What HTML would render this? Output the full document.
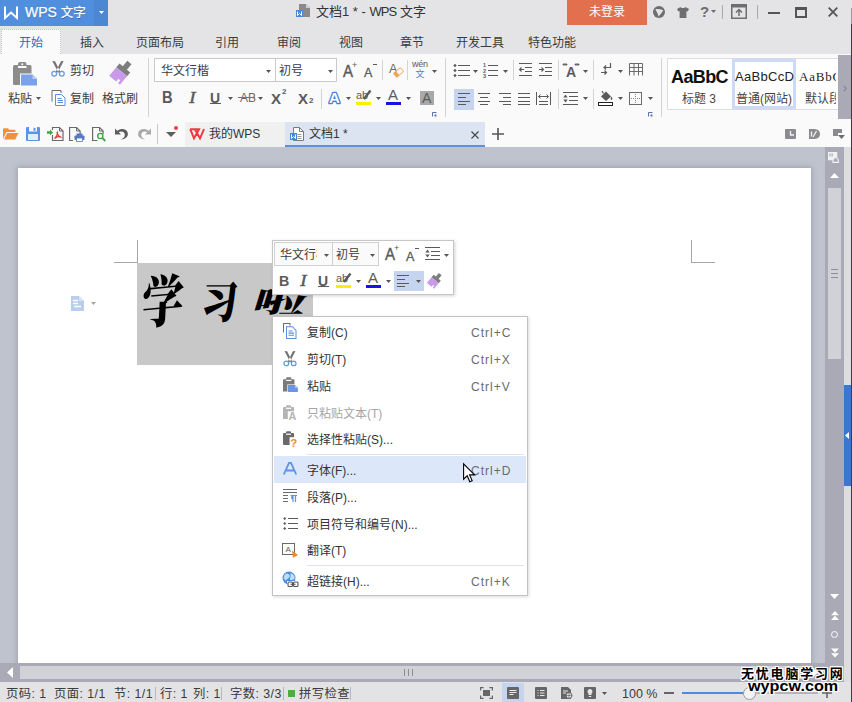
<!DOCTYPE html>
<html lang="zh-CN">
<head>
<meta charset="utf-8">
<title>文档1 * - WPS 文字</title>
<style>
html,body{margin:0;padding:0}
body{width:852px;height:702px;position:relative;overflow:hidden;background:#e4e4e6;
 font-family:"Liberation Sans","Noto Sans CJK SC",sans-serif;font-size:12px;color:#3c3c3c;line-height:1}
.a{position:absolute}
.t{position:absolute;white-space:nowrap;line-height:16px;height:16px}
svg{position:absolute;overflow:visible}
#titlebar{left:0;top:0;width:852px;height:25px;background:#e4e4e6}
#wpsbtn{left:0;top:0;width:94px;height:26px;background:#4f8fde}
#wpsdd{left:94px;top:0;width:14px;height:26px;background:#4c87d4}
#login{left:567px;top:0;width:80px;height:25px;background:#e2704e;color:#fff;text-align:center;line-height:25px;font-size:12px}
#tabs{left:0;top:26px;width:852px;height:28px;background:#e4e4e6}
#tabact{left:1px;top:29px;width:58px;height:24px;background:#fafafa;border:1px dotted #c4c4c8;border-bottom:none}
#ribbon{left:0;top:54px;width:852px;height:65px;background:#fafafa}
#qbar{left:0;top:119px;width:852px;height:28px;background:#fafafa}
#docarea{left:0;top:147px;width:825px;height:516px;background:#bfc3ce;overflow:hidden}
#page{left:18px;top:21px;width:793px;height:520px;background:#fff;box-shadow:0 0 5px 1px rgba(150,152,165,.8)}
#vscroll{left:825px;top:147px;width:19px;height:535px;background:#a9aab5}
#rstrip{left:844px;top:147px;width:8px;height:536px;background:#dddddf}
#hscroll{left:0;top:663px;width:825px;height:19px;background:#a9aab5}
#status{left:0;top:682px;width:852px;height:20px;background:#e3e3e5}
.tab{font-size:12px;top:35px;color:#3a3a3a}
.st{top:686px;font-size:12.300px;color:#3a3a3a;letter-spacing:.45px}
.wm{color:#000;z-index:30;text-shadow:-1px -1px 0 #fff,1px -1px 0 #fff,-1px 1px 0 #fff,1px 1px 0 #fff,0 -1px 0 #fff,0 1px 0 #fff,-1px 0 0 #fff,1px 0 0 #fff,0 0 2px #fff,0 0 2px #fff}
.hz{transform-origin:0 0;white-space:nowrap}
.sep{position:absolute;width:1px;background:#d4d4d6}
.mi{position:absolute;left:307px;font-size:12px;color:#333;white-space:nowrap;line-height:16px}
.mk{position:absolute;left:471px;font-size:12px;color:#6a6a70;letter-spacing:1px;white-space:nowrap;line-height:16px}
</style>
</head>
<body>
<!-- ===== base layout ===== -->
<div class="a" id="titlebar"></div>
<div class="a" id="tabs"></div>
<div class="a" id="tabact"></div>
<div class="a" id="ribbon"></div>
<div class="a" id="qbar"></div>
<div class="a" id="docarea"><div class="a" id="page"></div></div>
<div class="a" id="vscroll"></div>
<div class="a" id="rstrip"></div>
<div class="a" id="hscroll"></div>
<div class="a" id="status"></div>

<!-- ===== title bar ===== -->
<div class="a" id="wpsbtn"></div>
<div class="a" id="wpsdd"></div>
<svg style="left:4px;top:6px" width="15" height="13" viewBox="0 0 15 13"><path d="M1 0.5V12L7 6.5L13 12V0.5" fill="none" stroke="#fff" stroke-width="2"/></svg>
<div class="t" style="left:25px;top:4px;font-size:14px;color:#fff;-webkit-text-stroke:.25px #fff;text-shadow:.5px .5px 0 rgba(20,40,90,.45)">WPS <span style="font-size:12.500px;position:relative;top:-.5px">文字</span></div>
<svg style="left:99px;top:11px" width="5" height="3"><path d="M0 0h5L2.500 3z" fill="#fff"/></svg>
<div class="t" id="title" style="left:316px;top:4px;font-size:13px;color:#333">文档1 * - <span style="letter-spacing:-.9px">WPS</span> 文字</div>
<div class="a" id="login">未登录</div>

<!-- ===== tabs ===== -->
<div class="t tab" style="left:19px;color:#2b6cc4">开始</div>
<div class="t tab" style="left:80px">插入</div>
<div class="t tab" style="left:136px">页面布局</div>
<div class="t tab" style="left:215px">引用</div>
<div class="t tab" style="left:277px">审阅</div>
<div class="t tab" style="left:339px">视图</div>
<div class="t tab" style="left:400px">章节</div>
<div class="t tab" style="left:456px">开发工具</div>
<div class="t tab" style="left:528px">特色功能</div>

<!-- title icons -->
<svg style="left:296px;top:4px" width="15" height="14" viewBox="0 0 15 14"><path d="M3 0h7l4 4v9H3z" fill="#8a8a8a"/><path d="M10 0v4h4z" fill="#d0d0d0"/><rect x="0" y="6" width="7" height="7" fill="#4a86d8"/><path d="M1.5 7.5v4l2-2 2 2v-4" fill="none" stroke="#fff" stroke-width="1"/></svg>
<svg style="left:653px;top:6px" width="12" height="12" viewBox="0 0 12 12"><circle cx="6" cy="6" r="6" fill="#6e6e6e"/><path d="M2.300 3.200Q6 2.600 10.300 4.300Q8.500 7.500 5.600 10.600Q4.800 7 2.300 3.200z" fill="#e4e4e6"/></svg>
<svg style="left:677px;top:7px" width="12" height="11" viewBox="0 0 12 11"><path d="M3.5 0L0 2l1.3 2.6L2.6 4v7h6.8V4l1.3.6L12 2 8.500 0C8 1.300 4 1.300 3.500 0z" fill="#6e6e6e"/></svg>
<div class="t" style="left:700px;top:4px;font-size:15px;color:#6e6e6e;font-weight:bold">?</div>
<svg style="left:711px;top:10px" width="5" height="3"><path d="M0 0h5L2.5 3z" fill="#6e6e6e"/></svg>
<div class="sep" style="left:722px;top:5px;height:14px;background:#a8a8aa"></div>
<svg style="left:731px;top:4px" width="16" height="15" viewBox="0 0 16 15"><rect x=".75" y=".75" width="14.500" height="13.500" fill="none" stroke="#6e6e6e" stroke-width="1.500"/><rect x="1" y="1" width="14" height="2.500" fill="#6e6e6e"/><path d="M8 12V6M5 8.500l3-3 3 3" fill="none" stroke="#6e6e6e" stroke-width="1.500"/></svg>
<div class="sep" style="left:757px;top:5px;height:14px;background:#a8a8aa"></div>
<div class="a" style="left:768px;top:12px;width:12px;height:2px;background:#555"></div>
<div class="a" style="left:795px;top:7px;width:8px;height:6px;border:2px solid #555;border-top-width:3px"></div>
<svg style="left:828px;top:7px" width="10" height="10" viewBox="0 0 10 10"><path d="M.7.7l8.600 8.600M9.300.7L.7 9.300" stroke="#555" stroke-width="1.800"/></svg>

<!-- ribbon: clipboard group -->
<svg style="left:13px;top:62px" width="25" height="24" viewBox="0 0 25 24"><rect x="0" y="3" width="18.500" height="20" rx="1.500" fill="#8c8c8c"/><rect x="5" y="0" width="8.500" height="5" rx="2" fill="#8c8c8c"/><rect x="5" y="4" width="8.500" height="2" fill="#fafafa"/><circle cx="9.250" cy="2.300" r="1" fill="#fafafa"/><rect x="7" y="11.500" width="18" height="12.500" fill="#fafafa"/><path d="M8 12.500h11.500l4.500 4.500v6.500H8z" fill="#7aa2e8"/><path d="M19.500 12.500v4.500h4.500z" fill="#b9cdf3"/></svg>
<div class="t" style="left:8px;top:91px">粘贴</div>
<svg style="left:36px;top:97px" width="5" height="3"><path d="M0 0h5L2.5 3z" fill="#555"/></svg>
<svg style="left:51px;top:61px" width="14" height="16" viewBox="0 0 14 16"><path d="M1.300 0L4 .3 8.300 8.800 9.300 10.800 7.600 11.800 6.300 9.500zM12.700 0L10 .3 5.700 8.800 4.700 10.800 6.400 11.800 7.700 9.500z" fill="#727272"/><circle cx="3.200" cy="12.800" r="2.400" fill="none" stroke="#6a9ae0" stroke-width="1.300"/><circle cx="10.800" cy="12.800" r="2.400" fill="none" stroke="#6a9ae0" stroke-width="1.300"/></svg>
<div class="t" style="left:70px;top:63px">剪切</div>
<svg style="left:51px;top:90px" width="15" height="16" viewBox="0 0 15 16"><path d="M1 11.500V.5h9V3" fill="none" stroke="#6e6e6e" stroke-width="1"/><path d="M4.500 4.500h6l3.500 3.500v7.500h-9.500z" fill="#fff" stroke="#5b8fe0" stroke-width="1"/><path d="M6.500 8.500h4M6.500 10.500h5.500M6.500 12.500h5.500" stroke="#5b8fe0" stroke-width="1"/></svg>
<div class="t" style="left:70px;top:91px">复制</div>
<svg style="left:108px;top:61px" width="24" height="24" viewBox="0 0 24 24"><g transform="rotate(40 12 12)"><rect x="9.800" y="-2" width="5.400" height="8" fill="#7d7d7d"/><rect x="5.500" y="5" width="14" height="5" fill="#7d7d7d"/><path d="M5.500 10h14v11h-2.500v-3.500h-2.500v3.500H5.500z" fill="#c99aea"/></g></svg>
<div class="t" style="left:102px;top:91px">格式刷</div>
<div class="sep" style="left:148px;top:58px;height:59px"></div>
<!-- font combos -->
<div class="a" style="left:154px;top:58px;width:181px;height:22px;border:1px solid #c9c9cb;background:#fff;box-sizing:content-box"></div>
<div class="sep" style="left:275px;top:59px;height:22px;background:#c9c9cb"></div>
<div class="t" style="left:161px;top:63px">华文行楷</div>
<svg style="left:266px;top:70px" width="5" height="3"><path d="M0 0h5L2.5 3z" fill="#555"/></svg>
<div class="t" style="left:279px;top:63px">初号</div>
<svg style="left:328px;top:70px" width="5" height="3"><path d="M0 0h5L2.5 3z" fill="#555"/></svg>

<!-- font row 1 right -->
<div class="t" style="left:343px;top:61.500px;font-size:16px;line-height:20px;height:20px;color:#5a5a5a;-webkit-text-stroke:.4px #5a5a5a;transform:scaleX(.94);transform-origin:0 0">A</div>
<div class="t" style="left:352px;top:59px;font-size:9px;line-height:12px;height:12px;color:#5a5a5a">+</div>
<div class="t" style="left:364px;top:63.500px;font-size:12.500px;line-height:18px;height:18px;color:#5a5a5a;-webkit-text-stroke:.3px #5a5a5a">A</div>
<div class="a" style="left:373px;top:64px;width:4px;height:1px;background:#5a5a5a"></div>
<div class="sep" style="left:382px;top:60px;height:20px"></div>
<div class="t" style="left:389px;top:59.500px;font-size:12.500px;line-height:18px;height:18px;color:#6a6a6a">A</div>
<svg style="left:393px;top:67px" width="11" height="11" viewBox="0 0 11 11"><g transform="rotate(-40 5.500 5.500)"><rect x="0.500" y="2.500" width="10" height="6" rx="1.200" fill="#f0a35a"/><rect x="4.500" y="3.300" width="5.200" height="4.400" rx=".8" fill="#fff"/></g></svg>
<div class="sep" style="left:407px;top:60px;height:20px"></div>
<div class="t" style="left:412px;top:59px;font-size:9px;line-height:10px;height:10px;color:#5a5a5a;letter-spacing:-.2px">wén</div>
<div class="t" style="left:415.500px;top:69px;font-size:9px;line-height:11px;height:11px;color:#3f7fd8">文</div>
<svg style="left:432px;top:70px" width="5" height="3"><path d="M0 0h5L2.5 3z" fill="#555"/></svg>
<div class="sep" style="left:445px;top:58px;height:59px"></div>
<!-- font row 2 -->
<div class="t" style="left:162px;top:87.500px;font-weight:bold;font-size:16px;line-height:20px;height:20px;color:#5a5a5a;transform:scaleX(.92);transform-origin:0 0">B</div>
<div class="t" style="left:189px;top:88px;font-family:'Liberation Serif',serif;font-style:italic;font-size:16px;line-height:20px;height:20px;color:#5a5a5a;transform:scaleX(1.250);transform-origin:0 0;-webkit-text-stroke:.3px #5a5a5a">I</div>
<div class="t" style="left:210px;top:88px;font-weight:bold;font-size:14px;line-height:20px;height:20px;color:#5a5a5a">U</div>
<div class="a" style="left:210px;top:103px;width:11px;height:1px;background:#5a5a5a"></div>
<svg style="left:228px;top:97px" width="5" height="3"><path d="M0 0h5L2.5 3z" fill="#555"/></svg>
<div class="t" style="left:240px;top:90px;font-size:12px;color:#6a6a6a">AB</div>
<div class="a" style="left:238px;top:97px;width:17px;height:1px;background:#e04848"></div>
<svg style="left:258px;top:97px" width="5" height="3"><path d="M0 0h5L2.5 3z" fill="#555"/></svg>
<div class="t" style="left:271px;top:89px;font-weight:bold;font-size:15px;line-height:20px;height:20px;color:#5a5a5a">X</div>
<div class="t" style="left:282px;top:87px;font-size:8px;line-height:10px;height:10px;color:#5a5a5a;font-weight:bold">2</div>
<div class="t" style="left:298px;top:89px;font-weight:bold;font-size:15px;line-height:20px;height:20px;color:#5a5a5a">X</div>
<div class="t" style="left:309px;top:96px;font-size:8px;line-height:10px;height:10px;color:#5a5a5a;font-weight:bold">2</div>
<div class="sep" style="left:321px;top:89px;height:20px"></div>
<svg style="left:327px;top:91px" width="15" height="13" viewBox="0 0 15 13"><text x="7.500" y="12" text-anchor="middle" font-family="Liberation Sans" font-weight="bold" font-size="15" fill="#fff" stroke="#3f7fd8" stroke-width="2.600" stroke-linejoin="round" paint-order="stroke">A</text></svg>
<svg style="left:346px;top:97px" width="5" height="3"><path d="M0 0h5L2.5 3z" fill="#555"/></svg>
<div class="t" style="left:356px;top:88px;font-size:11px;line-height:14px;height:14px;color:#5a5a5a">ab</div>
<svg style="left:362px;top:90px" width="10" height="11" viewBox="0 0 10 11"><path d="M8.500 0.500L2 9" stroke="#5a5a5a" stroke-width="2.400"/></svg>
<div class="a" style="left:356px;top:102px;width:15px;height:3px;background:#ffee00"></div>
<svg style="left:376px;top:97px" width="5" height="3"><path d="M0 0h5L2.500 3z" fill="#555"/></svg>
<div class="t" style="left:388px;top:86px;font-size:15px;line-height:18px;height:18px;color:#5a5a5a">A</div>
<div class="a" style="left:386px;top:102px;width:15px;height:3px;background:#1414e6"></div>
<svg style="left:406px;top:97px" width="5" height="3"><path d="M0 0h5L2.500 3z" fill="#555"/></svg>
<div class="a" style="left:420px;top:91px;width:14px;height:14px;background:#a8a8a8"></div>
<div class="t" style="left:422px;top:89px;font-size:14px;line-height:18px;height:18px;color:#5a5a5a">A</div>
<svg style="left:432px;top:112px" width="5" height="5" viewBox="0 0 5 5"><path d="M0.500 4.500V0.500H4.500" fill="none" stroke="#6070a8" stroke-width="1"/><rect x="2.500" y="2.500" width="2" height="2" fill="#6070a8"/></svg>

<!-- paragraph group row 1 -->
<svg style="left:453px;top:63px" width="18" height="14" viewBox="0 0 18 14"><path d="M5 2.500h12M5 7.500h12M5 12.500h12" stroke="#5a5a5a" stroke-width="1.200"/><path d="M2 .8l1.700 1.700L2 4.200.3 2.500zM2 5.800l1.700 1.700L2 9.200.3 7.500zM2 10.800l1.700 1.700L2 14.200.3 12.500z" fill="#5a5a5a"/></svg>
<svg style="left:473px;top:70px" width="5" height="3"><path d="M0 0h5L2.500 3z" fill="#555"/></svg>
<svg style="left:483px;top:62px" width="16" height="16" viewBox="0 0 16 16"><path d="M5 3.500h10M5 8.500h10M5 13.500h10" stroke="#5a5a5a" stroke-width="1.200"/><text x="0" y="5" font-family="Liberation Sans" font-size="5.500" font-weight="bold" fill="#5a5a5a">1</text><text x="0" y="10.500" font-family="Liberation Sans" font-size="5.500" font-weight="bold" fill="#5a5a5a">2</text><text x="0" y="16" font-family="Liberation Sans" font-size="5.500" font-weight="bold" fill="#5a5a5a">3</text></svg>
<svg style="left:503px;top:70px" width="5" height="3"><path d="M0 0h5L2.500 3z" fill="#555"/></svg>
<div class="sep" style="left:513px;top:60px;height:20px"></div>
<svg style="left:519px;top:63px" width="13" height="14" viewBox="0 0 13 14"><path d="M0 .5h13M6 4.500h7M6 8.500h7M0 12.500h13" stroke="#5a5a5a" stroke-width="1"/><path d="M5 6.500H.5M2.500 4.500L.5 6.500l2 2" fill="none" stroke="#5a5a5a" stroke-width="1.100"/></svg>
<svg style="left:539px;top:63px" width="13" height="14" viewBox="0 0 13 14"><path d="M0 .5h13M6 4.500h7M6 8.500h7M0 12.500h13" stroke="#5a5a5a" stroke-width="1"/><path d="M0 6.500h4.500M2.500 4.500l2 2-2 2" fill="none" stroke="#5a5a5a" stroke-width="1.100"/></svg>
<div class="sep" style="left:558px;top:60px;height:20px"></div>
<svg style="left:563px;top:62px" width="16" height="16" viewBox="0 0 16 16"><text x="8" y="14.500" text-anchor="middle" font-family="Liberation Sans" font-weight="bold" font-size="14" fill="#5a5a5a">A</text><path d="M0 2.500h4M2.500 1L4 2.500 2.500 4M1.500 1L0 2.500 1.500 4M12 2.500h4M13.500 1L12 2.500 13.500 4M14.500 1L16 2.500 14.500 4" fill="none" stroke="#5a5a5a" stroke-width=".9"/></svg>
<svg style="left:583px;top:70px" width="5" height="3"><path d="M0 0h5L2.500 3z" fill="#555"/></svg>
<div class="sep" style="left:593px;top:60px;height:20px"></div>
<svg style="left:601px;top:63px" width="11" height="13" viewBox="0 0 11 13"><path d="M9.500 0v4.500H3M5 2.500L3 4.500l2 2" fill="none" stroke="#5a5a5a" stroke-width="1.200"/><path d="M0 9.500h5M3.500 7.500l2 2-2 2" fill="none" stroke="#5a5a5a" stroke-width="1.200"/></svg>
<svg style="left:618px;top:70px" width="5" height="3"><path d="M0 0h5L2.500 3z" fill="#555"/></svg>
<svg style="left:629px;top:63px" width="14" height="13" viewBox="0 0 14 13"><path d="M.5 12.500V.5h13v12M.5 4.500h13M.5 8.500h13M5 .5v12M9.500 .5v12" fill="none" stroke="#6a6a6a" stroke-width="1"/></svg>
<div class="sep" style="left:661px;top:58px;height:59px"></div>
<!-- paragraph group row 2 -->
<div class="a" style="left:454px;top:89px;width:20px;height:21px;background:#c5d5f0"></div>
<svg style="left:458px;top:93px" width="12" height="12" viewBox="0 0 12 12"><path d="M0 .5h12M0 4.500h8M0 8.500h12M0 11.500h8" stroke="#5a5a5a" stroke-width="1"/></svg>
<svg style="left:478px;top:93px" width="12" height="12" viewBox="0 0 12 12"><path d="M0 .5h12M2 4.500h8M0 8.500h12M2 11.500h8" stroke="#5a5a5a" stroke-width="1"/></svg>
<svg style="left:499px;top:93px" width="12" height="12" viewBox="0 0 12 12"><path d="M0 .5h12M4 4.500h8M0 8.500h12M4 11.500h8" stroke="#5a5a5a" stroke-width="1"/></svg>
<svg style="left:518px;top:93px" width="12" height="12" viewBox="0 0 12 12"><path d="M0 .5h12M0 4.500h12M0 8.500h12M0 11.500h12" stroke="#5a5a5a" stroke-width="1"/></svg>
<svg style="left:536px;top:92px" width="15" height="13" viewBox="0 0 15 13"><path d="M.5 0v13M14.500 0v13M2.500 4.500h10M4.500 2.500l-2 2 2 2M10.500 2.500l2 2-2 2M3 9.500h9M3 12.500h9" fill="none" stroke="#5a5a5a" stroke-width="1"/></svg>
<div class="sep" style="left:558px;top:89px;height:20px"></div>
<svg style="left:563px;top:92px" width="15" height="13" viewBox="0 0 15 13"><path d="M0 .5h15M6 4.500h9M6 8.500h9M0 12.500h15" stroke="#5a5a5a" stroke-width="1.200"/><path d="M2.500 2.500L.3 5.500h4.400zM2.500 10.500L.3 7.500h4.400z" fill="#5a5a5a"/></svg>
<svg style="left:583px;top:97px" width="5" height="3"><path d="M0 0h5L2.500 3z" fill="#555"/></svg>
<div class="sep" style="left:593px;top:89px;height:20px"></div>
<svg style="left:598px;top:90px" width="16" height="16" viewBox="0 0 16 16"><path d="M3 6.500L8 1.500l5 5-5 4.500z" fill="#5a5a5a"/><path d="M5.500 3.500L4 1" stroke="#5a5a5a" stroke-width="1.200"/><path d="M13.500 6.500q1.800 2.500 0 3.500q-1.800-1 0-3.500z" fill="#5a5a5a"/><rect x=".5" y="12.500" width="14" height="3" fill="#fff" stroke="#222" stroke-width="1"/></svg>
<svg style="left:618px;top:97px" width="5" height="3"><path d="M0 0h5L2.500 3z" fill="#555"/></svg>
<svg style="left:629px;top:92px" width="13" height="13" viewBox="0 0 13 13"><rect x=".5" y=".5" width="12" height="12" fill="none" stroke="#6a6a6a" stroke-width="1"/><path d="M6.500 2v9M2 6.500h9" stroke="#8a8a8a" stroke-width="1" stroke-dasharray="1 1"/></svg>
<svg style="left:648px;top:97px" width="5" height="3"><path d="M0 0h5L2.500 3z" fill="#555"/></svg>
<svg style="left:648px;top:112px" width="5" height="5" viewBox="0 0 5 5"><path d="M0.500 4.500V0.500H4.500" fill="none" stroke="#6070a8" stroke-width="1"/><rect x="2.500" y="2.500" width="2" height="2" fill="#6070a8"/></svg>

<!-- style gallery -->
<div class="a" style="left:667px;top:58px;width:171px;height:50px;border:1px solid #dcdcde;background:#fff;overflow:hidden">
 <div class="t" style="left:3px;top:7px;font-size:18px;font-weight:bold;line-height:22px;height:22px;color:#111;letter-spacing:-.6px">AaBbC</div>
 <div class="t" style="left:14px;top:32px;font-size:12px;color:#444">标题 3</div>
 <div class="a" style="left:64px;top:0;width:58px;height:44px;border:3px solid #ccdaf7"></div>
 <div class="t" style="left:67px;top:9px;font-size:13px;line-height:18px;height:18px;color:#222;letter-spacing:.3px">AaBbCcD</div>
 <div class="t" style="left:68px;top:32px;font-size:12px;color:#444">普通(网站)</div>
 <div class="t" style="left:131px;top:9px;font-size:13px;line-height:18px;height:18px;color:#222;font-family:'Liberation Serif',serif;letter-spacing:.8px">AaBbC</div>
 <div class="t" style="left:137px;top:32px;font-size:12px;color:#444">默认段</div>
 <div class="a" style="left:168px;top:0;width:3px;height:50px;background:#fff"></div>
</div>
<div class="a" style="left:838px;top:55px;width:13px;height:64px;background:#a9aab5"></div>
<svg style="left:843px;top:85px" width="4" height="7" viewBox="0 0 5 8"><path d="M.7.7L4 4 .7 7.300" fill="none" stroke="#6c6c78" stroke-width="1.200"/></svg>
<div class="a" style="left:851px;top:0;width:1px;height:702px;background:#3c3c44;z-index:50"></div><div class="a" style="left:851px;top:0;width:1px;height:8px;background:#dfe3ec;z-index:51"></div><div class="a" style="left:851px;top:8px;width:1px;height:16px;background:#9a9aa0;z-index:51"></div>

<!--RIBBON-->
<!-- quick access toolbar -->
<svg style="left:3px;top:128px" width="16" height="12" viewBox="0 0 16 12"><path d="M0 11V1.200Q0 .3 1 .3h4l1.200 1.500H11.500Q12.500 1.800 12.500 2.800V4H3.500L0 11z" fill="#f0923c"/><path d="M1 11.500L4.200 5H15.500L12.300 11.500z" fill="#f0923c"/></svg>
<svg style="left:26px;top:127px" width="14" height="14" viewBox="0 0 14 14"><path d="M0 1Q0 0 1 0h12Q14 0 14 1v12Q14 14 13 14H1Q0 14 0 13z" fill="#5b93ea"/><rect x="3" y="0" width="8" height="4.500" fill="#fafafa"/><rect x="7.500" y=".8" width="2" height="3" fill="#5b93ea"/><rect x="2" y="7" width="10" height="6" fill="#e4ecfa"/></svg>
<svg style="left:47px;top:126px" width="17" height="16" viewBox="0 0 17 16"><path d="M5.500 4V1.500h7l3.500 3.500v9.500H5.500V9" fill="none" stroke="#6a6a6a" stroke-width="1.200"/><path d="M12.500 1.500V5H16" fill="none" stroke="#6a6a6a" stroke-width="1"/><path d="M0 5.200h3V3.500l3 3-3 3V7.800H0z" fill="#3ea646"/><path d="M7.500 12.500C9.500 11 10.500 8 10.500 5.500M10 6C10.500 9 12.500 11 14.500 11.500M7.500 12.500C9.500 10.500 12.500 10.500 14.500 11.500" fill="none" stroke="#e03a3a" stroke-width="1.300"/></svg>
<svg style="left:69px;top:126px" width="16" height="16" viewBox="0 0 16 16"><path d="M4 14.500H.6V1.500h7l3.500 3.500v3" fill="none" stroke="#6a6a6a" stroke-width="1.200"/><path d="M7.500 1.500V5H11" fill="none" stroke="#6a6a6a" stroke-width="1"/><rect x="5.500" y="9.500" width="10" height="4.500" rx=".8" fill="#5a76c8"/><rect x="7.500" y="7.500" width="6" height="2.500" fill="#5a76c8"/><rect x="7.500" y="12" width="6" height="3.500" fill="#fafafa" stroke="#5a76c8" stroke-width=".8"/></svg>
<svg style="left:92px;top:126px" width="15" height="16" viewBox="0 0 15 16"><path d="M5.500 14.500H.6V1.500h7l3.500 3.500v3" fill="none" stroke="#6a6a6a" stroke-width="1.200"/><path d="M7.500 1.500V5H11" fill="none" stroke="#6a6a6a" stroke-width="1"/><circle cx="8.300" cy="10" r="2.600" fill="none" stroke="#3ea646" stroke-width="1.400"/><path d="M10.300 12l3 3" stroke="#3ea646" stroke-width="1.800"/></svg>
<svg style="left:115px;top:128px" width="14" height="12" viewBox="0 0 14 12"><path d="M0 0.500V6.500H6L3.800 4.300C6 2.800 9.500 3.500 9.800 6.500C10 9 8 10.800 5.500 11.500C10.500 11.500 13.500 8.500 12.800 5C12 1 6.500 -.5 2.200 2.700z" fill="#5e5e5e"/></svg>
<svg style="left:137px;top:128px" width="14" height="12" viewBox="0 0 14 12"><g transform="translate(14 0) scale(-1 1)"><path d="M0 0.500V6.500H6L3.800 4.300C6 2.800 9.500 3.500 9.800 6.500C10 9 8 10.800 5.500 11.500C10.500 11.500 13.500 8.500 12.800 5C12 1 6.500 -.5 2.200 2.700z" fill="#a9a9a9"/></g></svg>
<div class="sep" style="left:157px;top:124px;height:20px;background:#c8c8ca"></div>
<svg style="left:166px;top:132px" width="10" height="5"><path d="M0 0h10L5 5z" fill="#5e5e5e"/></svg>
<div class="a" style="left:174px;top:126px;width:4px;height:4px;border-radius:2px;background:#ee3d3d"></div>
<!-- doc tabs -->
<div class="a" style="left:185px;top:122px;width:100px;height:25px;background:#f0f0f1"></div>
<svg style="left:189px;top:128px" width="16" height="12" viewBox="0 0 16 12"><path d="M1 1.200H10L8 5 11 10.300 15 1.200M1.200 1.200L5 10.300 8 5 5.800 1.200" fill="none" stroke="#ea3b3e" stroke-width="2" stroke-linejoin="miter"/></svg>
<div class="t" style="left:209px;top:126px;font-size:12px;color:#333">我的WPS</div>
<div class="a" style="left:285px;top:122px;width:200px;height:25px;background:#dbe4f0"></div>
<div class="a" style="left:285px;top:145px;width:200px;height:2px;background:#5b93e0"></div>
<svg style="left:290px;top:127px" width="14" height="14" viewBox="0 0 14 14"><path d="M3.500 .5h6l4 4v9h-10z" fill="#fff" stroke="#7a7a7a" stroke-width="1"/><path d="M9.500 .5v4h4" fill="none" stroke="#7a7a7a" stroke-width="1"/><path d="M7.500 7.500h4M7.500 9.500h4M7.500 11.500h4" stroke="#9a9a9a" stroke-width="1"/><rect x="0" y="6" width="7" height="7" fill="#4a86d8"/><path d="M1.500 7.500v4l2-2 2 2v-4" fill="none" stroke="#fff" stroke-width="1"/></svg>
<div class="t" style="left:309px;top:126px;font-size:12px;color:#333">文档1 *</div>
<svg style="left:471px;top:131px" width="8" height="8" viewBox="0 0 8 8"><path d="M.5.500l7 7M7.500.500l-7 7" stroke="#444" stroke-width="1.100"/></svg>
<svg style="left:492px;top:128px" width="12" height="12" viewBox="0 0 12 12"><path d="M6 0v12M0 6h12" stroke="#555" stroke-width="1.600"/></svg>
<!-- quick bar right icons -->
<svg style="left:785px;top:129px" width="11" height="10" viewBox="0 0 11 10"><rect width="11" height="10" rx="1" fill="#8a8a90"/><path d="M5.500 2v4H9" fill="none" stroke="#f4f4f4" stroke-width="1.300"/></svg>
<svg style="left:809px;top:129px" width="11" height="10" viewBox="0 0 11 10"><path d="M0 0h5.500Q11 .5 11 5T5.500 10H0z" fill="#8a8a90"/><path d="M4 8L7.500 2M2.500 2.500v5" stroke="#f4f4f4" stroke-width="1.300" fill="none"/></svg>
<svg style="left:833px;top:129px" width="12" height="10" viewBox="0 0 12 10"><path d="M0 0h9v4H5v3H0z" fill="#8a8a90"/><path d="M5 6h7L8.500 10z" fill="#6e6e74"/></svg>

<!--QBAR-->
<!-- document content -->
<div class="a" style="left:137px;top:240px;width:1px;height:23px;background:#a6a6a6"></div>
<div class="a" style="left:114px;top:262px;width:24px;height:1px;background:#a6a6a6"></div>
<div class="a" style="left:691px;top:240px;width:1px;height:23px;background:#a6a6a6"></div>
<div class="a" style="left:691px;top:262px;width:24px;height:1px;background:#a6a6a6"></div>
<div class="a" style="left:137px;top:263px;width:176px;height:102px;background:#c8c8c8"></div>
<div class="a" id="hz" style="left:137px;top:263px;width:176px;height:102px;font-family:'Noto Serif CJK SC','Liberation Serif',serif;font-weight:900;color:#000">
 <span class="a hz" style="left:7px;top:5px;font-size:56px;line-height:64px;transform:scale(.74,1) skewX(-8deg) rotate(-4deg)">学</span>
 <span class="a hz" style="left:67px;top:8px;font-size:44px;line-height:56px;transform:scale(.82,1) skewX(-6deg)">习</span>
 <span class="a hz" style="left:124px;top:18px;font-size:40px;line-height:48px;transform:scale(1.300,.75) skewX(-10deg)">啦</span>
</div>
<svg style="left:71px;top:296px" width="13" height="15" viewBox="0 0 13 15"><path d="M0 0h8l5 5v10H0z" fill="#b9cdee"/><path d="M8 0v5h5" fill="#d6e3f6"/><path d="M2 4.500h5M2 7.500h5M3 10.500h7" stroke="#fff" stroke-width="1.400"/></svg>
<svg style="left:91px;top:302px" width="5" height="3"><path d="M0 0h5L2.500 3z" fill="#a4a4a4"/></svg>

<!--DOC-->
<!-- vertical scrollbar -->
<svg style="left:828px;top:152px" width="12" height="11" viewBox="0 0 11 10"><path d="M0 0h8.500v5H6L4.500 7.500H0z" fill="#f2f2f4"/><path d="M1.800 1v3M3.800 1v3" stroke="#a9aab5" stroke-width="1"/><path d="M4.500 9.500V7l2.500-2.500L9.500 7v2.500z" fill="#a9aab5" stroke="#f2f2f4" stroke-width="1"/></svg>
<svg style="left:830px;top:173px" width="9" height="5"><path d="M0 5L4.500 0 9 5z" fill="#fff"/></svg>
<div class="a" style="left:828px;top:188px;width:13px;height:171px;background:#d1d2d7"></div>
<div class="a" style="left:831px;top:269px;width:7px;height:1px;background:#8d8d95;box-shadow:0 4px 0 #8d8d95,0 8px 0 #8d8d95"></div>
<div class="a" style="left:844px;top:385px;width:7px;height:101px;background:#3b78cc"></div>
<svg style="left:845px;top:432px" width="4" height="7"><path d="M4 0v7L0 3.500z" fill="#fff"/></svg>
<svg style="left:830px;top:594px" width="9" height="5"><path d="M0 0h9L4.500 5z" fill="#fff"/></svg>
<svg style="left:830.500px;top:611px" width="8" height="9.500" viewBox="0 0 7 9" preserveAspectRatio="none"><path d="M0 4L3.500 0 7 4zM0 8.500L3.500 4.500 7 8.500z" fill="#fff"/></svg>
<div class="a" style="left:831px;top:631px;width:5px;height:5px;border:1px solid #fff;border-radius:4px"></div>
<svg style="left:830.500px;top:648px" width="8" height="9.500" viewBox="0 0 7 9" preserveAspectRatio="none"><path d="M0 .5h7L3.500 4.500zM0 5h7L3.500 9z" fill="#fff"/></svg>
<!-- horizontal scrollbar -->
<svg style="left:7px;top:667px" width="6" height="11"><path d="M6 0v11L0 5.500z" fill="#fff"/></svg>
<div class="a" style="left:20px;top:666px;width:786px;height:13px;background:#d1d2d7"></div>
<svg style="left:812px;top:667px" width="6" height="11"><path d="M0 0v11L6 5.500z" fill="#fff"/></svg>
<div class="a" style="left:404px;top:669px;width:1px;height:7px;background:#8d8d95;box-shadow:4px 0 0 #8d8d95,8px 0 0 #8d8d95"></div>

<!--SCROLL-->
<!-- status bar -->
<div class="t st" style="left:6px">页码: 1</div>
<div class="t st" style="left:54px">页面: 1/1</div>
<div class="t st" style="left:114px">节: 1/1</div>
<div class="sep" style="left:155px;top:687px;height:13px;background:#b8b8bc"></div>
<div class="t st" style="left:160px">行: 1</div>
<div class="t st" style="left:193px">列: 1</div>
<div class="sep" style="left:221px;top:687px;height:13px;background:#b8b8bc"></div>
<div class="t st" style="left:230px">字数: 3/3</div>
<div class="sep" style="left:283px;top:687px;height:13px;background:#b8b8bc"></div>
<div class="a" style="left:288px;top:690px;width:7px;height:7px;background:#4cae3c"></div>
<div class="t st" style="left:299px">拼写检查</div>
<div class="sep" style="left:350px;top:687px;height:13px;background:#b8b8bc"></div>
<svg style="left:480px;top:687px" width="13" height="12" viewBox="0 0 13 12"><path d="M.6 3.500V.6h3M9.400 .6h3v2.900M12.400 8.500v2.900h-3M3.600 11.400h-3V8.500" fill="none" stroke="#666" stroke-width="1.200"/><rect x="3" y="3" width="7" height="6" fill="#666"/></svg>
<div class="a" style="left:502px;top:683px;width:22px;height:19px;background:#c5d5f0"></div>
<svg style="left:507px;top:687px" width="12" height="12" viewBox="0 0 12 12"><rect width="12" height="12" rx="1" fill="#666"/><path d="M2.500 3.500h7M2.500 5.500h7M2.500 7.500h4" stroke="#e8eef8" stroke-width="1"/></svg>
<svg style="left:535px;top:687px" width="12" height="12" viewBox="0 0 12 12"><rect width="12" height="12" rx="1" fill="#666"/><path d="M2.500 3.500h1M5 3.500h4.500M2.500 6h1M5 6h4.500M2.500 8.500h1M5 8.500h4.500" stroke="#e8e8ea" stroke-width="1"/></svg>
<svg style="left:561px;top:687px" width="12" height="12" viewBox="0 0 12 12"><path d="M0 0h7l3 3v9H0z" fill="#666"/><path d="M2 4h5M2 6h3" stroke="#e8e8ea" stroke-width="1"/><circle cx="8" cy="8.500" r="3" fill="#e3e3e5" stroke="#666" stroke-width="1"/><path d="M5 8.500h6M8 5.500v6" stroke="#666" stroke-width=".7"/></svg>
<svg style="left:584px;top:687px" width="12" height="12" viewBox="0 0 12 12"><rect width="12" height="12" rx="1" fill="#666"/><path d="M6 2a2.500 2.500 0 0 1 1.500 4.500V8h-3V6.500A2.500 2.500 0 0 1 6 2zM4.800 9h2.400v1H4.800z" fill="#e8e8ea"/></svg>
<svg style="left:602px;top:692px" width="5" height="3"><path d="M0 0h5L2.500 3z" fill="#555"/></svg>
<div class="t st" style="left:622px;font-size:12.500px;letter-spacing:0">100 %</div>
<div class="a" style="left:664px;top:692px;width:10px;height:2px;background:#666"></div>
<div class="a" style="left:682px;top:692px;width:62px;height:2px;background:#4a8ae0"></div>
<div class="a" style="left:756px;top:692px;width:62px;height:2px;background:#b4b4b8"></div>
<div class="a" style="left:743px;top:687px;width:11px;height:11px;border:1px solid #9a9aa0;border-radius:7px;background:#f4f4f6"></div>
<svg style="left:822px;top:688px" width="10" height="10" viewBox="0 0 10 10"><path d="M5 0v10M0 5h10" stroke="#666" stroke-width="1.600"/></svg>

<!--STATUS-->
<!-- mini toolbar -->
<div class="a" style="left:272px;top:240px;width:180px;height:53px;background:#fff;border:1px solid #c6c6c8;box-shadow:1px 1px 3px rgba(0,0,0,.18);z-index:10"></div>
<div class="a" style="left:274px;top:242px;width:103px;height:22px;border:1px solid #d0d0d2;background:#fafafa;z-index:11"></div>
<div class="a" style="left:332px;top:243px;width:1px;height:22px;background:#d0d0d2;z-index:11"></div>
<div class="t" style="left:280px;top:247px;width:37px;overflow:hidden;z-index:12">华文行楷</div>
<svg style="left:324px;top:254px;z-index:12" width="5" height="3"><path d="M0 0h5L2.500 3z" fill="#555"/></svg>
<div class="t" style="left:336px;top:247px;z-index:12">初号</div>
<svg style="left:370px;top:254px;z-index:12" width="5" height="3"><path d="M0 0h5L2.500 3z" fill="#555"/></svg>
<div class="t" style="left:385px;top:245px;font-size:16px;transform:scaleX(.94);transform-origin:0 0;line-height:20px;height:20px;color:#5a5a5a;-webkit-text-stroke:.4px #5a5a5a;z-index:12">A</div>
<div class="t" style="left:394px;top:242px;font-size:9px;line-height:12px;height:12px;color:#5a5a5a;z-index:12">+</div>
<div class="t" style="left:406px;top:247.500px;font-size:12.500px;line-height:18px;height:18px;color:#5a5a5a;-webkit-text-stroke:.3px #5a5a5a;z-index:12">A</div>
<div class="a" style="left:415px;top:248px;width:4px;height:1px;background:#5a5a5a;z-index:12"></div>
<svg style="left:425px;top:247px;z-index:12" width="15" height="13" viewBox="0 0 15 13"><path d="M0 .5h15M6 4.500h9M6 8.500h9M0 12.500h15" stroke="#5a5a5a" stroke-width="1.200"/><path d="M2.500 2.500L.3 5.500h4.400zM2.500 10.500L.3 7.500h4.400z" fill="#5a5a5a"/></svg>
<svg style="left:444px;top:254px;z-index:12" width="5" height="3"><path d="M0 0h5L2.500 3z" fill="#555"/></svg>
<div class="t" style="left:279px;top:270.500px;font-weight:bold;font-size:15.500px;line-height:20px;height:20px;color:#5a5a5a;z-index:12;transform:scaleX(.92);transform-origin:0 0">B</div>
<div class="t" style="left:300px;top:271px;font-family:'Liberation Serif',serif;font-style:italic;font-size:16px;line-height:20px;height:20px;color:#5a5a5a;z-index:12;transform:scaleX(1.250);transform-origin:0 0;-webkit-text-stroke:.3px #5a5a5a">I</div>
<div class="t" style="left:318px;top:271px;font-weight:bold;font-size:14px;line-height:20px;height:20px;color:#5a5a5a;z-index:12">U</div>
<div class="a" style="left:318px;top:286px;width:11px;height:1px;background:#5a5a5a;z-index:12"></div>
<div class="t" style="left:336px;top:271px;font-size:11px;line-height:14px;height:14px;color:#5a5a5a;z-index:12">ab</div>
<svg style="left:342px;top:273px;z-index:12" width="10" height="11" viewBox="0 0 10 11"><path d="M8.500 0.500L2 9" stroke="#5a5a5a" stroke-width="2.400"/></svg>
<div class="a" style="left:336px;top:285px;width:15px;height:3px;background:#ffee00;z-index:12"></div>
<svg style="left:356px;top:280px;z-index:12" width="5" height="3"><path d="M0 0h5L2.500 3z" fill="#555"/></svg>
<div class="t" style="left:368px;top:269px;font-size:15px;line-height:18px;height:18px;color:#5a5a5a;z-index:12">A</div>
<div class="a" style="left:366px;top:285px;width:15px;height:3px;background:#1414e6;z-index:12"></div>
<svg style="left:386px;top:280px;z-index:12" width="5" height="3"><path d="M0 0h5L2.500 3z" fill="#555"/></svg>
<div class="a" style="left:394px;top:271px;width:30px;height:20px;background:#c5d5f0;z-index:11"></div>
<svg style="left:397px;top:275px;z-index:12" width="12" height="12" viewBox="0 0 12 12"><path d="M0 .5h12M0 4.500h8M0 8.500h12M0 11.500h8" stroke="#5a5a5a" stroke-width="1"/></svg>
<svg style="left:416px;top:280px;z-index:12" width="5" height="3"><path d="M0 0h5L2.500 3z" fill="#555"/></svg>
<svg style="left:426px;top:273px;z-index:12" width="16" height="16" viewBox="0 0 24 24"><g transform="rotate(40 12 12)"><rect x="9.800" y="-2" width="5.400" height="8" fill="#7d7d7d"/><rect x="5.500" y="5" width="14" height="5" fill="#7d7d7d"/><path d="M5.500 10h14v11h-2.500v-3.500h-2.500v3.500H5.500z" fill="#c99aea"/></g></svg>

<!--MINI-->
<!-- context menu -->
<div class="a" style="left:272px;top:316px;width:254px;height:278px;background:#fff;border:1px solid #c2c2c4;box-shadow:1px 1px 3px rgba(0,0,0,.15);z-index:20"></div>
<div class="a" style="left:274px;top:456px;width:252px;height:27px;background:#dce8fa;z-index:21"></div>
<div class="a" style="left:307px;top:454px;width:217px;height:1px;background:#e2e2e4;z-index:21"></div>
<div class="a" style="left:307px;top:565px;width:217px;height:1px;background:#e2e2e4;z-index:21"></div>
<div id="menu" class="a" style="left:0;top:0;z-index:22">
<div class="mi" style="top:325px">复制(C)</div><div class="mk" style="top:325px">Ctrl+C</div>
<div class="mi" style="top:352px">剪切(T)</div><div class="mk" style="top:352px">Ctrl+X</div>
<div class="mi" style="top:379px">粘贴</div><div class="mk" style="top:379px">Ctrl+V</div>
<div class="mi" style="top:406px;color:#a6a6a6">只粘贴文本(T)</div>
<div class="mi" style="top:432px">选择性粘贴(S)...</div>
<div class="mi" style="top:463px">字体(F)...</div><div class="mk" style="top:463px">Ctrl+D</div>
<div class="mi" style="top:490px">段落(P)...</div>
<div class="mi" style="top:517px">项目符号和编号(N)...</div>
<div class="mi" style="top:543px">翻译(T)</div>
<div class="mi" style="top:574px">超链接(H)...</div><div class="mk" style="top:574px">Ctrl+K</div>
<!-- menu icons -->
<svg style="left:283px;top:323px" width="14" height="16" viewBox="0 0 14 15" preserveAspectRatio="none"><path d="M.5 9V.5h6.500V2.500" fill="none" stroke="#6e6e6e" stroke-width="1"/><path d="M3.500 3.500h6l3.500 3.500v7.500h-9.500z" fill="#fff" stroke="#5b8fe0" stroke-width="1"/><path d="M5.500 7.500h4M5.500 9.500h5.500M5.500 11.500h5.500" stroke="#5b8fe0" stroke-width="1"/></svg>
<svg style="left:283px;top:350.500px" width="14" height="15.500" viewBox="0 0 14 16"><path d="M1.300 0L4 .3 8.300 8.800 9.300 10.800 7.600 11.800 6.300 9.500zM12.700 0L10 .3 5.700 8.800 4.700 10.800 6.400 11.800 7.700 9.500z" fill="#727272"/><circle cx="3.200" cy="12.800" r="2.400" fill="none" stroke="#6a9ae0" stroke-width="1.300"/><circle cx="10.800" cy="12.800" r="2.400" fill="none" stroke="#6a9ae0" stroke-width="1.300"/></svg>
<svg style="left:283px;top:377px" width="15.500" height="15.500" viewBox="0 0 25 24"><rect x="0" y="3" width="18.500" height="20" rx="1.500" fill="#7a7a7a"/><rect x="5" y="0" width="8.500" height="5" rx="2" fill="#7a7a7a"/><rect x="5" y="4" width="8.500" height="2" fill="#fff"/><rect x="7" y="11.500" width="18" height="12.500" fill="#fff"/><path d="M8 12.500h11.500l4.500 4.500v6.500H8z" fill="#6a96e4"/><path d="M19.500 12.500v4.500h4.500z" fill="#b9cdf3"/></svg>
<svg style="left:283px;top:405px" width="15" height="15" viewBox="0 0 25 24"><rect x="0" y="3" width="18.500" height="20" rx="1.500" fill="#b4b4b4"/><rect x="5" y="0" width="8.500" height="5" rx="2" fill="#b4b4b4"/><rect x="5" y="4" width="8.500" height="2" fill="#fff"/><rect x="8" y="10" width="17" height="14" fill="#fff"/><text x="9" y="24" font-family="Liberation Sans" font-weight="bold" font-size="18" fill="#b4b4b8">A</text></svg>
<svg style="left:283px;top:431px" width="15" height="16" viewBox="0 0 25 26"><rect x="0" y="3" width="18.500" height="20" rx="1.500" fill="#6a6a6a"/><rect x="5" y="0" width="8.500" height="5" rx="2" fill="#6a6a6a"/><rect x="5" y="4" width="8.500" height="2" fill="#fff"/><rect x="11" y="10" width="14" height="16" fill="#fff"/><text x="12" y="26" font-family="Liberation Sans" font-weight="bold" font-size="19" fill="#f08a1e">?</text></svg>
<svg style="left:283px;top:462px" width="14" height="13" viewBox="0 0 14 13"><path d="M.8 12.500L6 .8h2l5.200 11.700M3 8.500h8" fill="none" stroke="#5b93e0" stroke-width="1.800"/></svg>
<svg style="left:283px;top:489px" width="15" height="13" viewBox="0 0 15 13"><path d="M0 .5h14M0 3.500h14M0 6.500h5M0 9.500h5M0 12.500h5" stroke="#6a6a6a" stroke-width="1"/><path d="M7.500 6.500h6.500M10 6.500v6.500M12.500 6.500v6.500" stroke="#5b93e0" stroke-width="1.200" fill="none"/><path d="M10 6.500a2 2 0 0 0 0 4z" fill="#5b93e0"/></svg>
<svg style="left:283px;top:517px" width="15" height="13" viewBox="0 0 15 13"><path d="M5 1.500h10M5 6.500h10M5 11.500h10" stroke="#5a5a5a" stroke-width="1.200"/><path d="M1.700 0l1.500 1.500-1.500 1.500L.2 1.500zM1.700 5l1.500 1.500-1.500 1.500L.2 6.500zM1.700 10l1.500 1.500-1.500 1.500L.2 11.500z" fill="#5a5a5a"/></svg>
<svg style="left:282px;top:543px" width="16" height="15" viewBox="0 0 16 15"><rect x=".5" y=".5" width="12" height="11" fill="#fff" stroke="#6a6a6a" stroke-width="1"/><text x="3.500" y="9" font-family="Liberation Sans" font-size="8" fill="#5a5a5a">A</text><path d="M10 7.500l6 4.500-5 2.800z" fill="#f08a1e"/></svg>
<svg style="left:282px;top:571px" width="17" height="17" viewBox="0 0 17 17"><circle cx="7" cy="7" r="6.500" fill="#4a8ae0"/><path d="M2.500 4Q5 1.500 7 3.500T6 7.500 4 10 1.500 7.500zM8.500 2Q11.500 2.500 12.500 5.500T10 9 8.500 6z" fill="#c4dafa"/><rect x="5" y="10" width="12" height="6.500" fill="#fff"/><rect x="6" y="11" width="4.500" height="4.500" rx="1" fill="#fff" stroke="#555" stroke-width="1.100"/><rect x="11.500" y="11" width="4.500" height="4.500" rx="1" fill="#fff" stroke="#555" stroke-width="1.100"/><path d="M8.500 13.250h5" stroke="#555" stroke-width="1.100"/></svg>
</div>

<!--MENU-->
<!-- watermark -->
<div class="t wm" style="left:741px;top:665px;font-size:13px;letter-spacing:1.800px;line-height:18px;height:18px;font-family:'Liberation Sans','Noto Sans CJK SC',sans-serif;font-weight:bold">无忧电脑学习网</div>
<div class="t wm" style="left:747.500px;top:676px;font-size:14.500px;line-height:20px;height:20px;font-weight:bold;transform-origin:0 0;transform:scaleX(1.115)">wypcw.com</div>
<!-- mouse cursor -->
<svg style="left:463px;top:463px;z-index:40" width="13" height="20" viewBox="0 0 13 20"><path d="M.6.800V16.200L4.200 12.800 6.800 18.800 9.200 17.800 6.600 11.900H11.600z" fill="#fff" stroke="#000" stroke-width="1.100" stroke-linejoin="miter"/></svg>

<!--OVERLAY-->
</body>
</html>
